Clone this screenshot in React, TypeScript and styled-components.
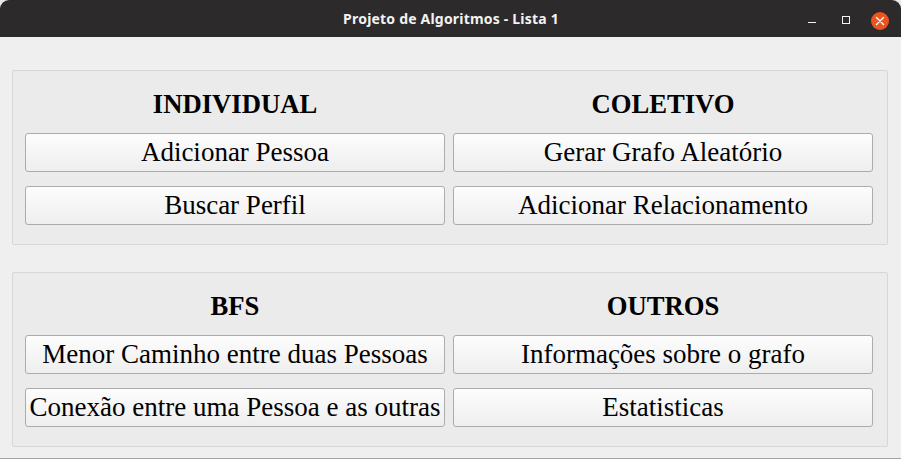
import React from 'react';
import styled, { createGlobalStyle } from 'styled-components';


const GlobalStyle = createGlobalStyle`
  html, body {
    margin: 0;
    padding: 0;
    background: #e9e9e9;
  }
`;

interface Group {
  title: string;
  actions: string[];
}

const groups: Group[][] = [
  [
    { title: 'INDIVIDUAL', actions: ['Adicionar Pessoa', 'Buscar Perfil'] },
    { title: 'COLETIVO', actions: ['Gerar Grafo Aleatório', 'Adicionar Relacionamento'] },
  ],
  [
    { title: 'BFS', actions: ['Menor Caminho entre duas Pessoas', 'Conexão entre uma Pessoa e as outras'] },
    { title: 'OUTROS', actions: ['Informações sobre o grafo', 'Estatisticas'] },
  ],
];

const App: React.FC = () => {
  return (
    <>
      <GlobalStyle />
      <Window>
        <TitleBar>
          <Title>Projeto de Algoritmos - Lista 1</Title>
          <WindowControls>
            <ControlButton aria-label="minimizar">
              <MinimizeGlyph />
            </ControlButton>
            <ControlButton aria-label="maximizar">
              <MaximizeGlyph />
            </ControlButton>
            <CloseButton aria-label="fechar">
              <svg width="10" height="10" viewBox="0 0 10 10">
                <path d="M1.5 1.5 L8.5 8.5 M8.5 1.5 L1.5 8.5" stroke="#fff" strokeWidth="1.4" strokeLinecap="round" />
              </svg>
            </CloseButton>
          </WindowControls>
        </TitleBar>

        <Content>
          {groups.map((row, i) => (
            <GroupBox key={i}>
              {row.map(group => (
                <Column key={group.title}>
                  <Heading>{group.title}</Heading>
                  {group.actions.map(action => (
                    <ActionButton key={action}>{action}</ActionButton>
                  ))}
                </Column>
              ))}
            </GroupBox>
          ))}
        </Content>
      </Window>
    </>
  );
};


const Window = styled.div`
  width: 901px;
  height: 459px;
  box-sizing: border-box;
  display: flex;
  flex-direction: column;
  background: #efefef;
  border-radius: 9px 9px 0 0;
  border-bottom: 1px solid #a3a3a3;
  overflow: hidden;
`;

const TitleBar = styled.div`
  position: relative;
  height: 37px;
  flex: none;
  display: flex;
  align-items: center;
  justify-content: center;
  background: #2c2a2b;
`;

const Title = styled.span`
  font-family: 'Noto Sans', 'DejaVu Sans', sans-serif;
  font-weight: 700;
  font-size: 14px;
  color: #f2f2f2;
  letter-spacing: 0.2px;
  margin-left: 1px;
`;

const WindowControls = styled.div`
  position: absolute;
  right: 12px;
  top: 0;
  height: 37px;
  display: flex;
  align-items: center;
  gap: 16px;
`;

const ControlButton = styled.div`
  width: 18px;
  height: 18px;
  margin-top: 4px;
  display: flex;
  align-items: center;
  justify-content: center;
`;

const MinimizeGlyph = styled.div`
  width: 8px;
  height: 1.5px;
  margin-top: 4px;
  background: #f2f2f2;
`;

const MaximizeGlyph = styled.div`
  width: 6px;
  height: 6px;
  margin-top: -2px;
  border: 1.3px solid #f2f2f2;
`;

const CloseButton = styled.div`
  width: 18px;
  height: 18px;
  margin-top: 4px;
  border-radius: 50%;
  background: #e95420;
  display: flex;
  align-items: center;
  justify-content: center;
`;

const Content = styled.div`
  flex: 1;
  display: flex;
  flex-direction: column;
  gap: 27px;
  padding: 33px 13px 0 12px;
`;

const GroupBox = styled.div`
  height: 175px;
  box-sizing: border-box;
  display: grid;
  grid-template-columns: 1fr 1fr;
  column-gap: 8px;
  padding: 18px 14px 0 12px;
  background: #ebebeb;
  border: 1px solid #d7d7d7;
  border-radius: 2px;
`;

const Column = styled.div`
  display: flex;
  flex-direction: column;
  gap: 14px;
`;

const Heading = styled.h2`
  margin: 0;
  height: 30px;
  line-height: 31px;
  text-align: center;
  font-family: 'Liberation Serif', 'Times New Roman', serif;
  font-weight: 700;
  font-size: 26.67px;
  color: #000;
`;

const ActionButton = styled.button`
  height: 39px;
  padding: 0;
  display: flex;
  align-items: center;
  justify-content: center;
  font-family: 'Liberation Serif', 'Times New Roman', serif;
  font-size: 27px;
  color: #000;
  white-space: nowrap;
  background: linear-gradient(#fdfdfd, #eeeeee);
  border: 1px solid #acacac;
  border-radius: 3px;
  cursor: pointer;
`;

export default App;
